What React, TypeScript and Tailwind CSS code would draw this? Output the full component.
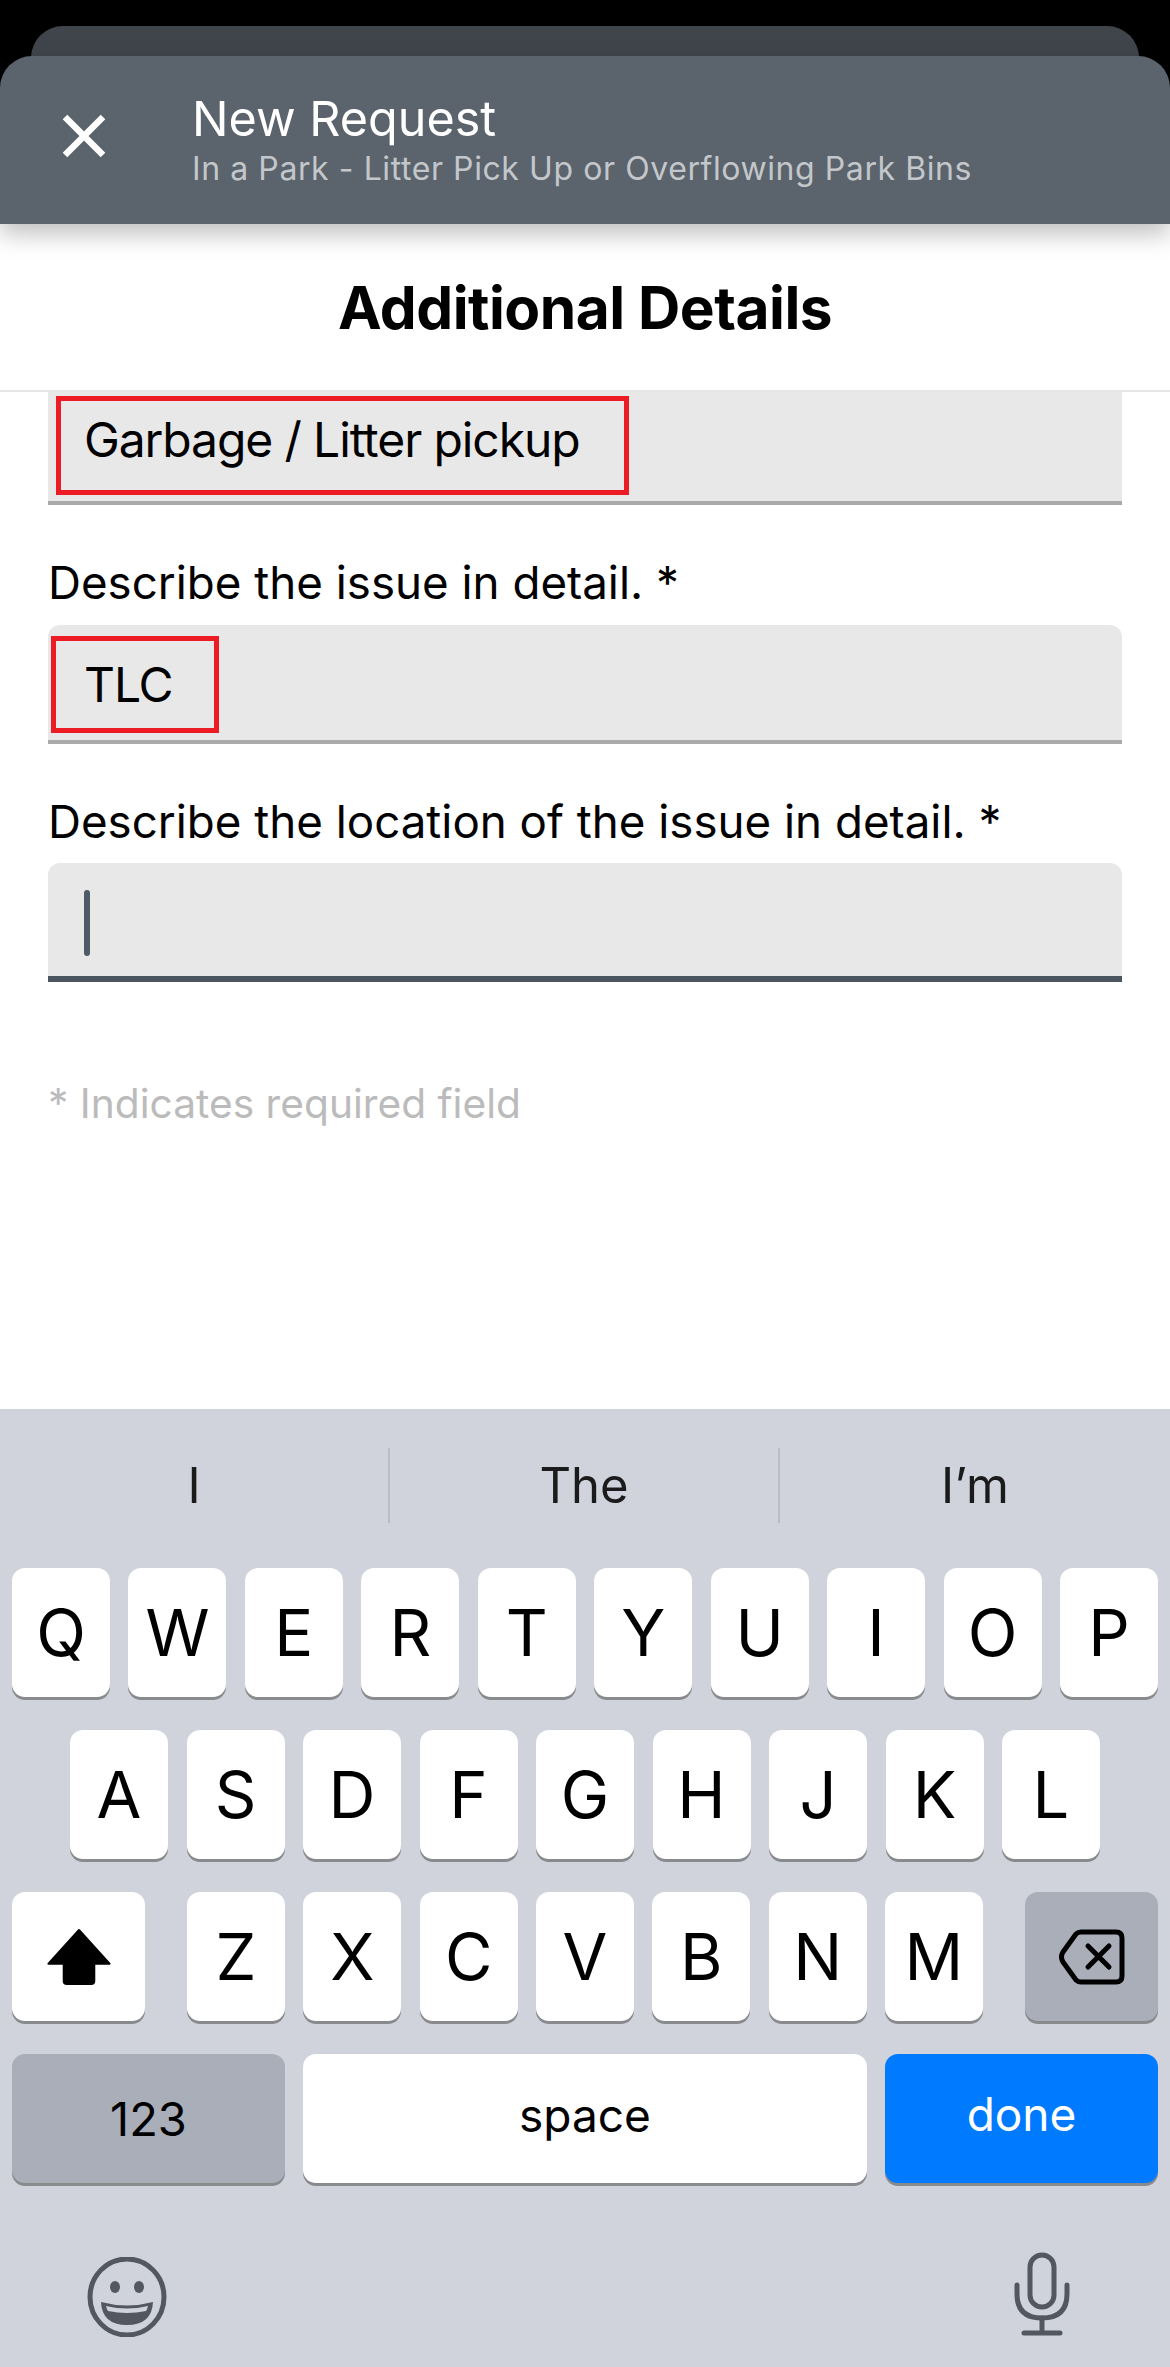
const fontClass = "font-['Inter','Liberation_Sans',sans-serif]";

function Key({ label, w = "w-[98px]", tone = "bg-white text-black", size = "text-[65px]", pad = "", children }: { label?: string; w?: string; tone?: string; size?: string; pad?: string; children?: React.ReactNode }) {
  return (
    <div className={`${w} ${tone} ${size} ${pad} h-[129px] shrink-0 rounded-[13px] shadow-[0_3px_0_#898a8d] flex items-center justify-center font-normal leading-none`}>
      {label}
      {children}
    </div>
  );
}

function Field({ h, line, pad = "", children }: { h: string; line: string; pad?: string; children?: React.ReactNode }) {
  return <div className={`relative ${h} mx-[48px] bg-[#e8e8e8] rounded-t-[12px] ${line} ${pad} flex items-center pl-[36px] text-[48px] tracking-[-1.1px] text-black`}>{children}</div>;
}

const Letters = ({ s }: { s: string }) => (
  <>
    {s.split("").map((c) => (
      <Key key={c} label={c} />
    ))}
  </>
);

export default function App() {
  return (
    <div className={`${fontClass} w-[1170px] h-[2367px] overflow-hidden bg-black flex flex-col`}>
      <div className="pt-[26px] px-[31px] h-[56px]">
        <div className="h-[60px] bg-[#40454c] rounded-t-[32px]" />
      </div>

      <header className="relative z-10 h-[168px] bg-[#5b636c] rounded-t-[32px] shadow-[0_10px_24px_rgba(0,0,0,0.25)] flex items-center pl-[60px]">
        <svg width="48" height="48" viewBox="0 0 48 48" className="shrink-0 -mt-[8px]">
          <path d="M5 5 L43 43 M43 5 L5 43" stroke="#fff" strokeWidth="6.5" fill="none" />
        </svg>
        <div className="ml-[85px] flex flex-col">
          <div className="text-[48.5px] leading-[58px] text-white font-normal -ml-[1px]">New Request</div>
          <div className="text-[32px] leading-[42px] text-[#c3c7cb] tracking-[0.58px] -ml-[1px]">In a Park - Litter Pick Up or Overflowing Park Bins</div>
        </div>
      </header>

      <main className="bg-white h-[1185px] flex flex-col">
        <div className="h-[168px] flex items-center justify-center border-b-2 border-[#e6e6e6] shrink-0">
          <h1 className="text-[58.6px] font-bold text-black leading-none tracking-[-0.5px] pt-[2px]">Additional Details</h1>
        </div>

        <Field h="h-[113px]" line="border-b-4 border-[#aaaaaa] !rounded-none" pad="pb-[14px]">
          <span>Garbage / Litter pickup</span>
          <div className="absolute left-[8px] top-[4px] w-[573px] h-[99px] border-[5px] border-[#ed1c24]" />
        </Field>

        <label className="mx-[48px] mt-[52px] text-[45.7px] leading-[52px] text-black">Describe the issue in detail. *</label>
        <div className="h-[16px]" />
        <Field h="h-[119px]" line="border-b-4 border-[#aaaaaa]" pad="pt-[4px]">
          <span>TLC</span>
          <div className="absolute left-[3px] top-[11px] w-[168px] h-[97px] border-[5px] border-[#ed1c24]" />
        </Field>

        <label className="mx-[48px] mt-[52px] text-[45.7px] leading-[52px] text-black">Describe the location of the issue in detail. *</label>
        <div className="h-[15px]" />
        <Field h="h-[119px]" line="border-b-[6px] border-[#4a5560]" pad="pt-[6px]">
          <div className="w-[6px] h-[66px] rounded-full bg-[#4f5b66]" />
        </Field>

        <p className="mx-[48px] mt-[97px] text-[40.7px] leading-[50px] text-[#bbbbbb]">* Indicates required field</p>
      </main>

      <section className="flex-1 bg-[#d0d3db] flex flex-col">
        <div className="h-[159px] shrink-0 grid grid-cols-3 pt-[39px] pb-[45px] text-[49px] text-[#1b1b1b] leading-none">
          <div className="flex items-center justify-center border-r-2 border-[#babdc4]">I</div>
          <div className="flex items-center justify-center border-r-2 border-[#babdc4]">The</div>
          <div className="flex items-center justify-center">I’m</div>
        </div>

        <div className="flex justify-between px-[12px]">
          <Letters s="QWERTYUIOP" />
        </div>
        <div className="flex justify-between pl-[70px] pr-[70px] mt-[33px]">
          <Letters s="ASDFGHJKL" />
        </div>
        <div className="flex justify-between px-[12px] mt-[33px]">
          <Key w="w-[133px]">
            <svg width="66" height="57" viewBox="0 0 64 56">
              <path d="M32 2 L62 35 H47 V52 Q47 55 44 55 H20 Q17 55 17 52 V35 H2 Z" fill="#000" stroke="#000" strokeWidth="2" strokeLinejoin="round" />
            </svg>
          </Key>
          <div className="flex w-[796px] justify-between">
            <Letters s="ZXCVBNM" />
          </div>
          <Key w="w-[133px]" tone="bg-[#a9aeb9] text-black">
            <svg width="66" height="56" viewBox="0 0 66 56" fill="none" stroke="#000" strokeWidth="5" strokeLinecap="round" strokeLinejoin="round">
              <path d="M22 3 H57 Q63 3 63 9 V47 Q63 53 57 53 H22 Q19 53 17 51 L4 33 Q1 28 4 23 L17 5 Q19 3 22 3 Z" />
              <path d="M29 17 L50 38 M50 17 L29 38" />
            </svg>
          </Key>
        </div>
        <div className="flex justify-between px-[12px] mt-[33px]">
          <Key w="w-[273px]" tone="bg-[#a9aeb9] text-black" size="text-[47px]" label="123" />
          <Key w="w-[564px]" size="text-[46px]" pad="pb-[8px]" label="space" />
          <Key w="w-[273px]" tone="bg-[#007aff] text-white" size="text-[46px]" pad="pb-[10px]" label="done" />
        </div>

        <div className="flex justify-between pl-[87px] pr-[100px] mt-[74px] items-start">
          <svg width="80" height="80" viewBox="0 0 80 80" fill="none">
            <ellipse cx="40" cy="40" rx="37" ry="38" stroke="#53575f" strokeWidth="5" />
            <ellipse cx="28" cy="30" rx="5" ry="6" fill="#53575f" />
            <ellipse cx="52" cy="30" rx="5" ry="6" fill="#53575f" />
            <path d="M14 45 Q40 52 66 45 Q65 68 40 68 Q15 68 14 45 Z" fill="#53575f" />
            <path d="M19 49 Q40 54 61 49 Q60 53 59 54 Q40 58 21 54 Q20 53 19 49 Z" fill="#d0d3db" />
          </svg>
          <svg width="56" height="84" viewBox="0 0 56 84" fill="none" stroke="#53575f" strokeWidth="5" strokeLinecap="round" className="-mt-[5px]">
            <rect x="16" y="3" width="24" height="52" rx="12" />
            <path d="M3 33 V42 Q3 66 28 66 Q53 66 53 42 V33" />
            <path d="M28 66 V81 M10 81 H46" />
          </svg>
        </div>
      </section>
    </div>
  );
}
